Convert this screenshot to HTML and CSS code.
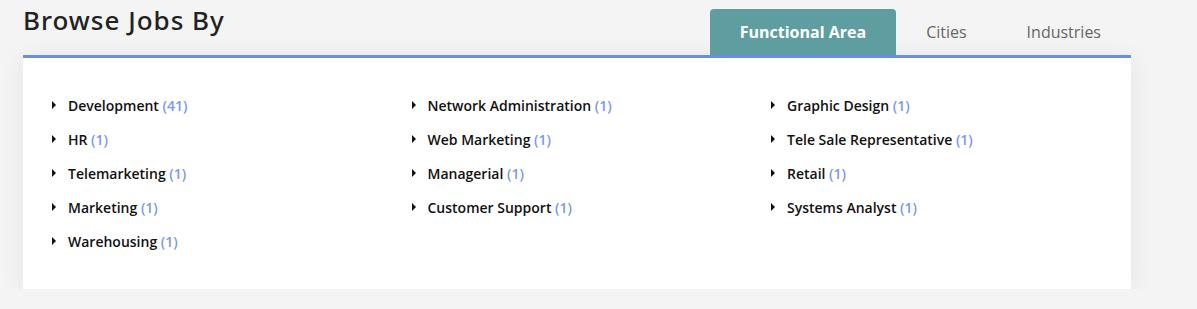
FILE: index.html
```html
<!DOCTYPE html>
<html lang="en">
<head>
  <meta charset="UTF-8">
  <meta name="viewport" content="width=device-width, initial-scale=1.0">
  <title>Browse Jobs By</title>
  <link rel="stylesheet" href="styles.css">
</head>
<body>
  <div class="browse">
    <div class="browse-head">
      <h2>Browse Jobs By</h2>
      <ul class="tabs">
        <li class="tab active">Functional Area</li>
        <li class="tab">Cities</li>
        <li class="tab">Industries</li>
      </ul>
    </div>
    <div class="card">
      <ul class="job-list">
        <li><a href="#">Development <span>(41)</span></a></li>
        <li><a href="#">Network Administration <span>(1)</span></a></li>
        <li><a href="#">Graphic Design <span>(1)</span></a></li>
        <li><a href="#">HR <span>(1)</span></a></li>
        <li><a href="#">Web Marketing <span>(1)</span></a></li>
        <li><a href="#">Tele Sale Representative <span>(1)</span></a></li>
        <li><a href="#">Telemarketing <span>(1)</span></a></li>
        <li><a href="#">Managerial <span>(1)</span></a></li>
        <li><a href="#">Retail <span>(1)</span></a></li>
        <li><a href="#">Marketing <span>(1)</span></a></li>
        <li><a href="#">Customer Support <span>(1)</span></a></li>
        <li><a href="#">Systems Analyst <span>(1)</span></a></li>
        <li><a href="#">Warehousing <span>(1)</span></a></li>
      </ul>
    </div>
  </div>
</body>
</html>
```

FILE: styles.css
```css
body {
  margin: 0;
  padding: 0;
  background-color: #f4f4f4;
  font-family: 'Open Sans', 'Noto Sans', sans-serif;
  color: #111;
}

.browse {
  width: 1108px;
  margin-left: 23px;
}

.browse-head {
  display: flex;
  justify-content: space-between;
  align-items: flex-end;
  height: 55px;
}

.browse-head h2 {
  margin: 0;
  align-self: flex-start;
  padding-top: 3px;
  font-family: 'Noto Sans', sans-serif;
  font-size: 26px;
  font-weight: 500;
  line-height: 34px;
  color: #222;
  letter-spacing: 1px;
}

.tabs {
  display: flex;
  list-style: none;
  margin: 0;
  padding: 0;
}

.tab {
  height: 46px;
  line-height: 46px;
  padding: 0 30px;
  font-size: 16px;
  color: #666;
  border-radius: 4px 4px 0 0;
  cursor: pointer;
}

.tab.active {
  background-color: #5f9ea0;
  color: #fff;
  font-weight: 700;
}

.card {
  background-color: #fff;
  border-top: 3px solid #6a8fdc;
  box-shadow: 0 4px 24px rgba(0, 0, 0, 0.07);
  padding: 30px 0 31px 29px;
}

.job-list {
  display: grid;
  grid-template-columns: repeat(3, 359.5px);
  grid-auto-rows: 34px;
  list-style: none;
  margin: 0;
  padding: 0;
}

.job-list li {
  display: flex;
  align-items: center;
  font-size: 14px;
  font-weight: 600;
}

.job-list li::before {
  content: "";
  width: 0;
  height: 0;
  border-top: 4px solid transparent;
  border-bottom: 4px solid transparent;
  border-left: 4px solid #111;
  margin-right: 12px;
}

.job-list a {
  color: #111;
  text-decoration: none;
}

.job-list span {
  color: #7c99e8;
}
```
